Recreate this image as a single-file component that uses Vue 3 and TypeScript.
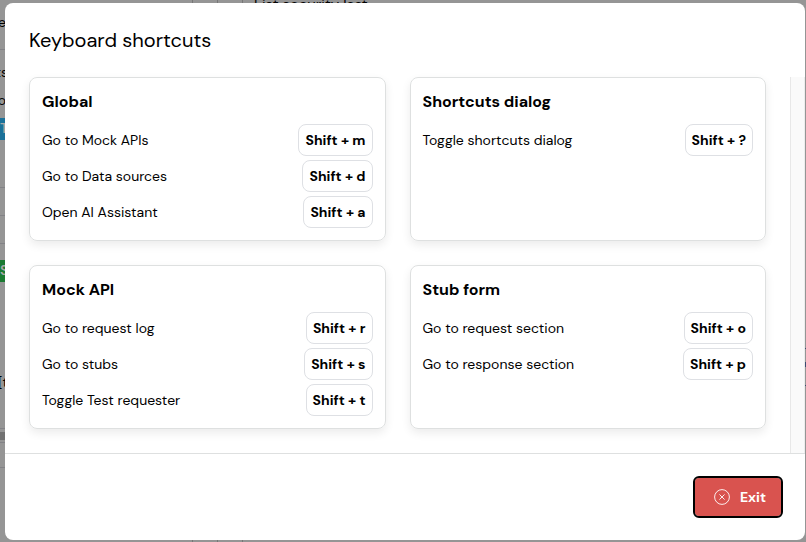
<script setup lang="ts">
interface Shortcut {
  label: string
  keys: string
}

interface ShortcutGroup {
  title: string
  shortcuts: Shortcut[]
}

const groups: ShortcutGroup[] = [
  {
    title: 'Global',
    shortcuts: [
      { label: 'Go to Mock APIs', keys: 'Shift + m' },
      { label: 'Go to Data sources', keys: 'Shift + d' },
      { label: 'Open AI Assistant', keys: 'Shift + a' },
    ],
  },
  {
    title: 'Shortcuts dialog',
    shortcuts: [{ label: 'Toggle shortcuts dialog', keys: 'Shift + ?' }],
  },
  {
    title: 'Mock API',
    shortcuts: [
      { label: 'Go to request log', keys: 'Shift + r' },
      { label: 'Go to stubs', keys: 'Shift + s' },
      { label: 'Toggle Test requester', keys: 'Shift + t' },
    ],
  },
  {
    title: 'Stub form',
    shortcuts: [
      { label: 'Go to request section', keys: 'Shift + o' },
      { label: 'Go to response section', keys: 'Shift + p' },
    ],
  },
]
</script>

<template>
  <div class="screen">
    <div class="underlay" aria-hidden="true">
      <i class="column c1"></i>
      <i class="column c2"></i>
      <i class="column c3"></i>
      <span class="piece top-text">List security last</span>
      <span class="piece p1">e</span>
      <i class="rule r1"></i>
      <span class="piece p2">ts</span>
      <span class="piece p3">o</span>
      <span class="piece badge blue">T</span>
      <i class="rule r2"></i>
      <i class="rule r3"></i>
      <i class="rule r4"></i>
      <span class="piece badge green">S</span>
      <span class="piece p4">[t</span>
      <i class="rule r5"></i>
      <i class="bar"></i>
      <i class="rule r6"></i>
      <i class="rule r7"></i>
      <i class="tick t1"></i>
      <i class="tick t2"></i>
      <i class="tick t3"></i>
    </div>

    <section class="dialog" role="dialog" aria-modal="true" aria-labelledby="dialog-title">
      <header class="dialog-header">
        <h1 id="dialog-title">Keyboard shortcuts</h1>
      </header>
      <div class="dialog-body">
        <div class="groups">
          <article v-for="group in groups" :key="group.title" class="card">
            <h2>{{ group.title }}</h2>
            <ul>
              <li v-for="item in group.shortcuts" :key="item.keys">
                <span>{{ item.label }}</span>
                <kbd>{{ item.keys }}</kbd>
              </li>
            </ul>
          </article>
        </div>
        <div class="track"></div>
      </div>
      <footer class="dialog-footer">
        <button type="button" class="exit">
          <svg viewBox="0 0 16 16" width="16" height="16" fill="none" stroke="currentColor" aria-hidden="true">
            <circle cx="8" cy="8" r="7.4" stroke-width="0.9" />
            <path d="M5.7 5.7l4.6 4.6M10.3 5.7l-4.6 4.6" stroke-width="0.9" stroke-linecap="round" />
          </svg>
          Exit
        </button>
      </footer>
    </section>
  </div>
</template>

<style>
body {
  margin: 0;
}
</style>

<style scoped>
* {
  box-sizing: border-box;
}

.screen {
  position: relative;
  display: flex;
  min-height: 100vh;
  padding: 3px 1px 2px 5px;
  overflow: hidden;
  background: #959595;
  color: #000;
  font-family: 'DM Sans', Inter, 'Open Sans', sans-serif;
  font-size: 14px;
  line-height: 20px;
}

.underlay {
  position: absolute;
  inset: 0;
}

.underlay > * {
  position: absolute;
}

.piece {
  right: calc(100% - 6px);
  white-space: nowrap;
}

.top-text {
  right: auto;
  left: 254px;
  top: -5px;
  font-size: 15px;
}

.p1 { top: 12px; }
.p2 { top: 62px; right: calc(100% - 8px); }
.p3 { top: 90px; }
.p4 { top: 372px; right: calc(100% - 8px); }

.badge {
  right: auto;
  left: 0;
  width: 5px;
  height: 22px;
  color: #a8a8a8;
  font-weight: 600;
}

.blue { top: 118px; background: #1b7199; }
.green { top: 260px; background: #1b7a32; }

.rule {
  left: 0;
  width: 5px;
  height: 1px;
  background: #828286;
}

.r1 { top: 49px; }
.r2 { top: 187px; }
.r3 { top: 215px; }
.r4 { top: 243px; }
.r5 { top: 428px; }
.r6 { top: 442px; }
.r7 { top: 467px; }

.bar {
  left: 0;
  top: 432px;
  width: 5px;
  height: 8px;
  background: #717171;
}

.column {
  top: 0;
  bottom: 0;
  width: 1px;
  background: #777;
}

.c1 { left: 192px; }
.c2 { left: 217px; }
.c3 { left: 242px; }

.tick {
  right: 0;
  width: 1px;
  height: 1px;
  background: #3b4a70;
}

.t1 { top: 348px; }
.t2 { top: 362px; height: 5px; }
.t3 { top: 385px; }

.dialog {
  position: relative;
  display: flex;
  flex: 1;
  flex-direction: column;
  min-width: 0;
  overflow: hidden;
  border-radius: 8px;
  background: #fff;
}

.dialog-header {
  padding: 22px 24px;
}

h1 {
  margin: 0;
  font-size: 20px;
  font-weight: 400;
  line-height: 30px;
}

.dialog-body {
  display: flex;
  flex: 1;
}

.groups {
  display: grid;
  flex: 1;
  grid-template-columns: 1fr 1fr;
  gap: 24px;
  align-content: start;
  padding: 0 24px 24px;
}

.track {
  width: 15px;
  border-left: 1px solid #e8e8e8;
  border-right: 1px solid #ededed;
  background: #fafafa;
}

.card {
  padding: 12px;
  border: 1px solid #dee0e0;
  border-radius: 8px;
  box-shadow: 0 4px 10px rgba(0, 0, 0, 0.08);
}

h2 {
  margin: 0 0 10px;
  font-size: 16px;
  font-weight: 700;
  line-height: 24px;
}

ul {
  display: grid;
  gap: 4px;
  margin: 0;
  padding: 0;
  list-style: none;
}

li {
  display: flex;
  align-items: center;
  justify-content: space-between;
}

kbd {
  height: 32px;
  padding: 0 6px;
  border: 1px solid #dee0e4;
  border-radius: 8px;
  font-family: inherit;
  font-weight: 700;
  line-height: 30px;
}

.dialog-footer {
  display: flex;
  justify-content: flex-end;
  padding: 24px;
  border-top: 1px solid #dee0e0;
}

.exit {
  display: flex;
  align-items: center;
  gap: 10px;
  height: 38px;
  padding: 0 15px 0 19px;
  border: 0;
  border-radius: 4px;
  outline: 2px solid #000;
  background: #d9534f;
  color: #fff;
  font: inherit;
  font-weight: 700;
}
</style>
